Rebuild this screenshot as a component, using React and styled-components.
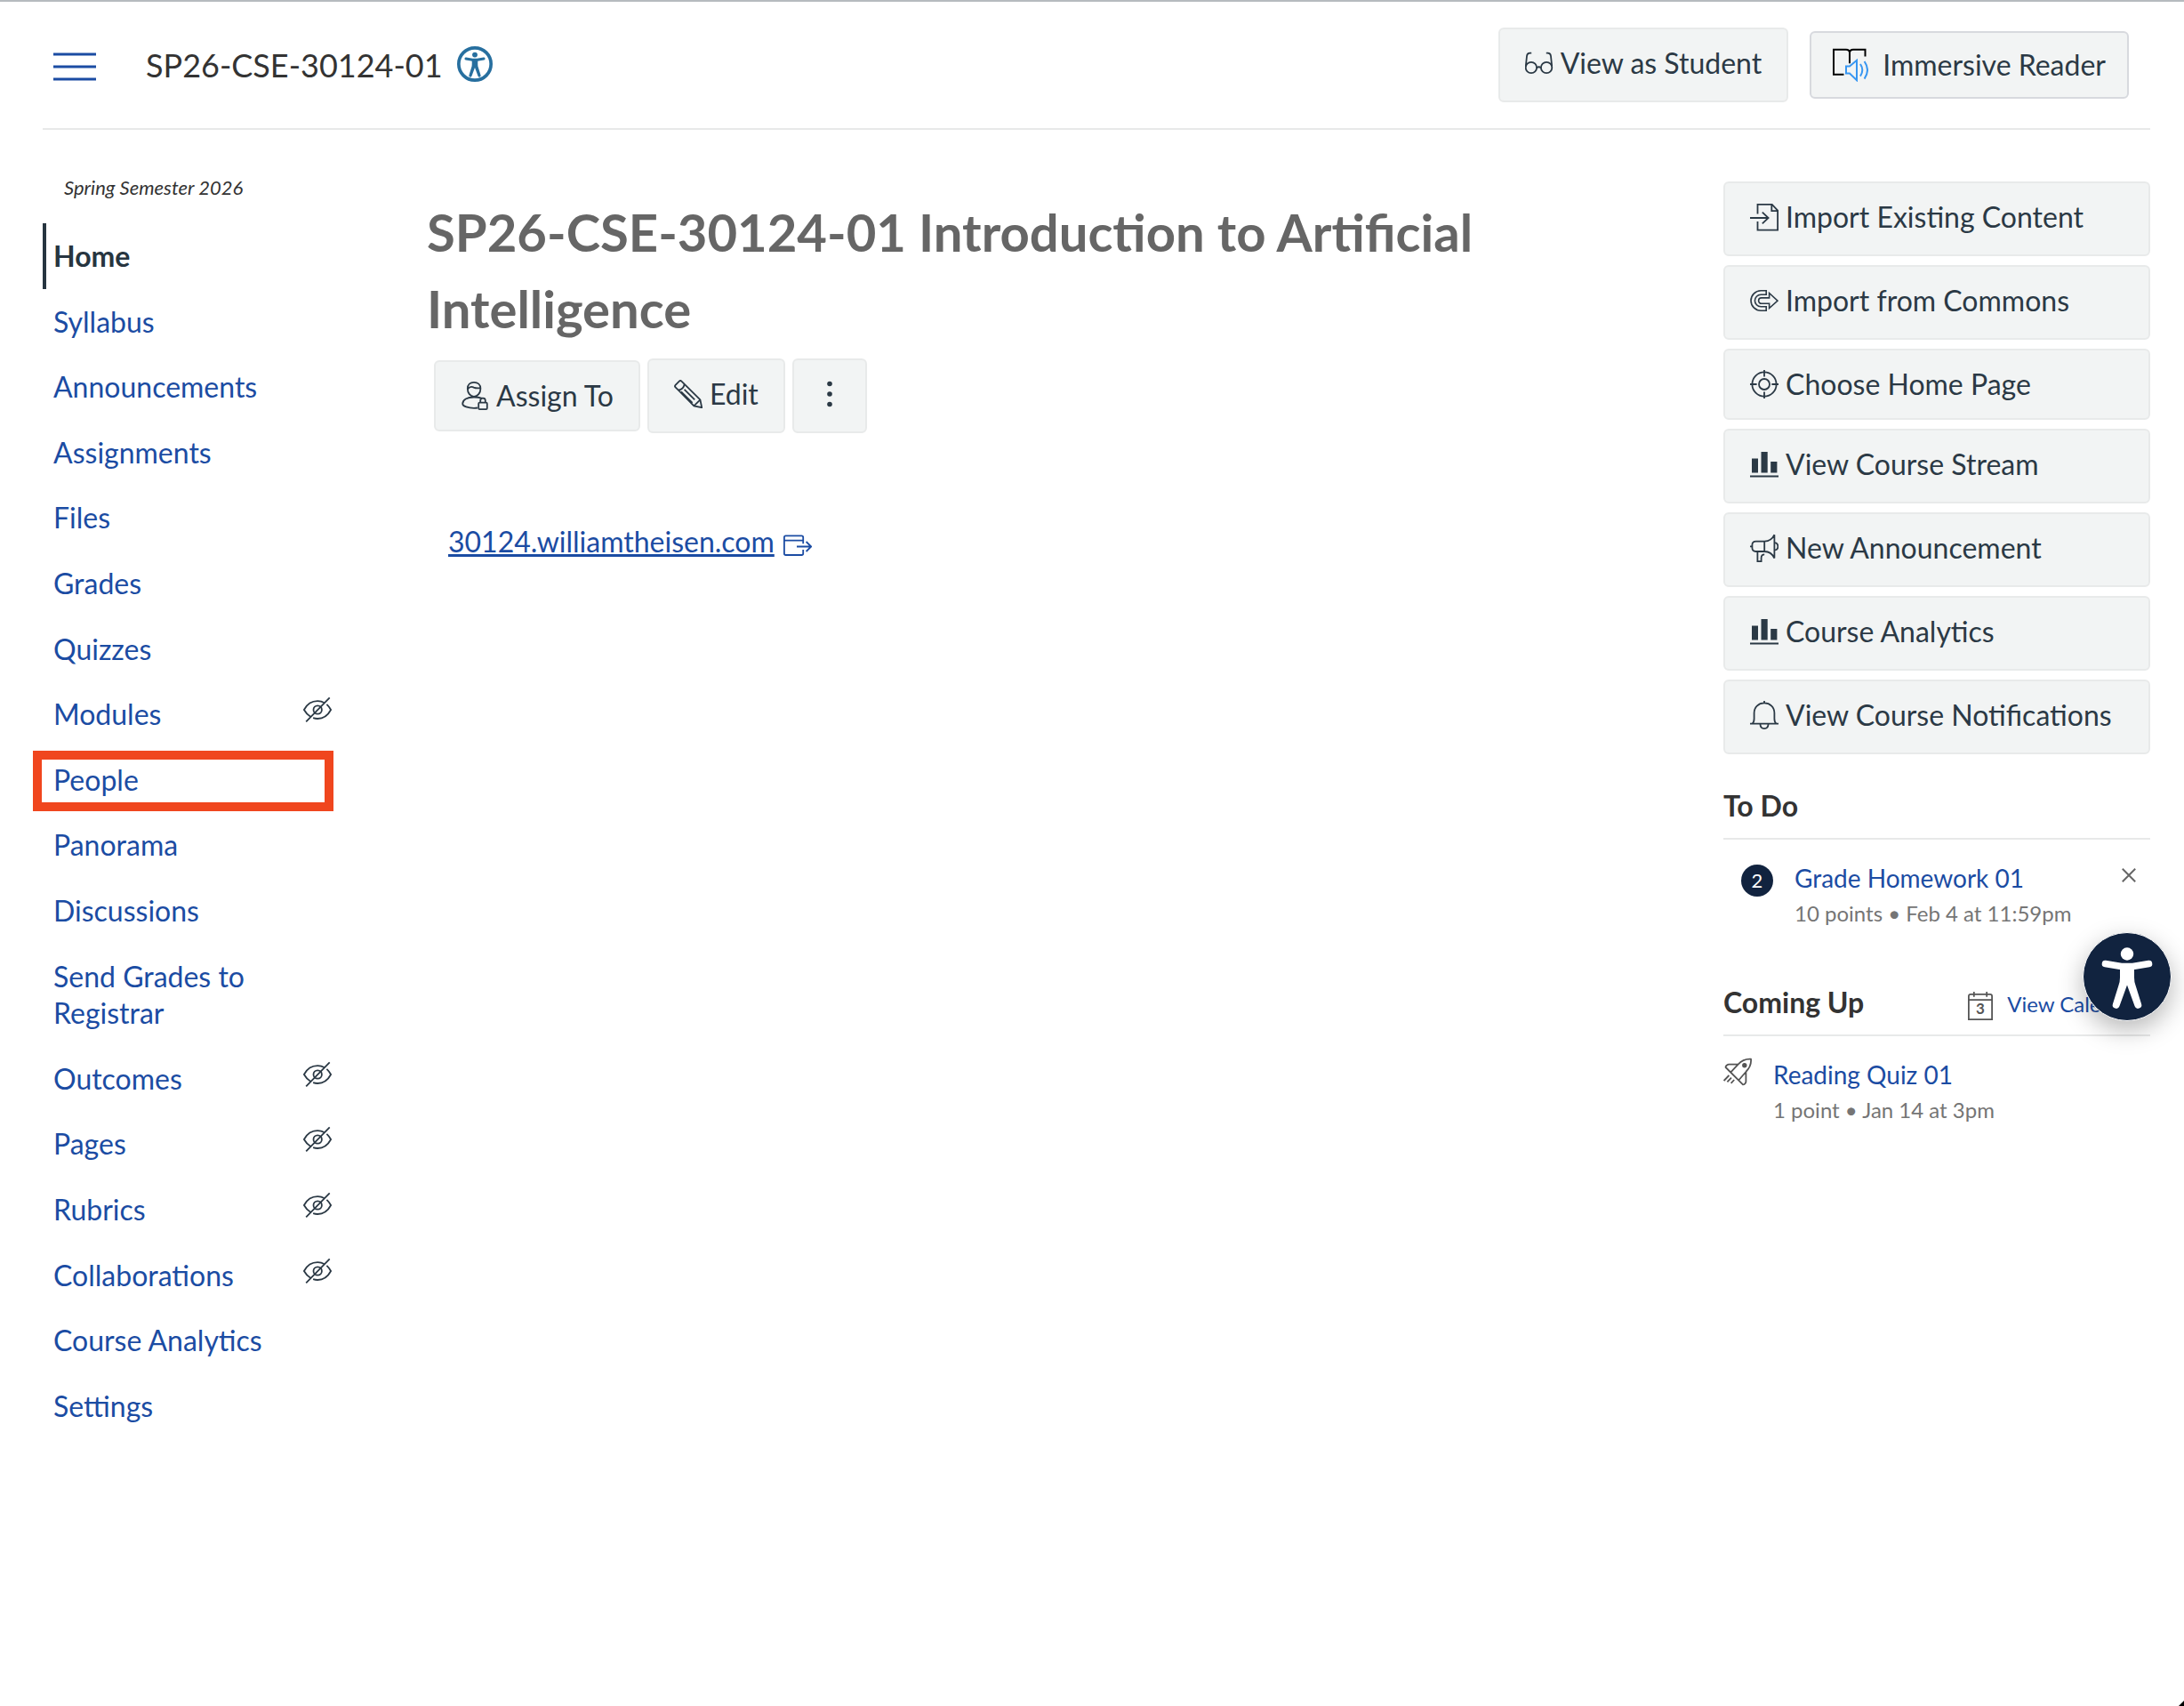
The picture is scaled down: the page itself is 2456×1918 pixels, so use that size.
import React from "react"
import styled, { createGlobalStyle, css } from "styled-components"

const GlobalStyle = createGlobalStyle`
    * {
        box-sizing: border-box;
    }
    body {
        margin: 0;
        background: #ffffff;
        color: #333333;
        font-family: "Lato", sans-serif;
        font-size: 32px;
    }
    h1, h2, p, ul {
        margin: 0;
        padding: 0;
    }
    ul {
        list-style: none;
    }
`

const Page = styled.div`
    position: relative;
    min-height: 100vh;
    border-top: 2px solid #b6bbbf;
    padding: 0 38px 0 48px;
`

/* header */
const Header = styled.header`
    display: flex;
    align-items: center;
    height: 144px;
    padding: 0 24px 0 12px;
    border-bottom: 2px solid #e8e9e9;
`

const MenuButton = styled.button`
    display: flex;
    margin-right: 56px;
    padding: 4px 0 0;
    border: none;
    background: none;
    color: #1b4ca3;
    cursor: pointer;
`

const Crumb = styled.span`
    font-size: 36px;
    line-height: 44px;
`

const RoundIcon = styled.button`
    display: flex;
    margin-left: 16px;
    padding: 0 0 2px;
    border: none;
    background: none;
    color: #276f9f;
    cursor: pointer;
`

const HeaderActions = styled.div`
    display: flex;
    align-items: center;
    gap: 24px;
    margin-left: auto;
`

/* buttons */
const buttonBase = css`
    display: flex;
    align-items: center;
    gap: 8px;
    padding: 18px 28px;
    border: 2px solid #e8eaea;
    border-radius: 6px;
    background: #f2f4f4;
    color: #2b3945;
    font-family: inherit;
    font-size: 32px;
    line-height: 40px;
    text-decoration: none;
    white-space: nowrap;
    cursor: pointer;
`

const Button = styled.button`
    ${buttonBase}
`

const LinkButton = styled.a`
    ${buttonBase}
    padding-bottom: 22px;
`

const MoreButton = styled.button`
    ${buttonBase}
    padding-bottom: 22px;
`

const ReaderButton = styled(Button)`
    gap: 16px;
    padding: 16px 24px;
    border-color: #d7d9de;
`

/* columns */
const Columns = styled.div`
    display: grid;
    grid-template-columns: 325px minmax(0, 1fr) 480px;
`

const CourseNav = styled.nav`
    padding-top: 51px;
`

const Term = styled.p`
    margin-bottom: 26px;
    padding-left: 24px;
    font-size: 22px;
    font-style: italic;
    line-height: 28px;
`

const NavItem = styled.li`
    position: relative;
    ${({ $marked }) =>
        $marked &&
        css`
            &::after {
                content: "";
                position: absolute;
                inset: 4px -2px 1px -11px;
                border: 10px solid #f0461e;
                pointer-events: none;
            }
        `}
`

const NavLink = styled.a`
    display: flex;
    align-items: flex-start;
    justify-content: space-between;
    padding: 16px 0 16px 8px;
    border-left: 4px solid ${({ $active }) => ($active ? "#273540" : "transparent")};
    color: ${({ $active }) => ($active ? "#273540" : "#1b4ca3")};
    font-weight: ${({ $active }) => ($active ? "bold" : "normal")};
    line-height: 1.3;
    text-decoration: none;
    svg {
        color: #2b3945;
    }
`

const Main = styled.main`
    padding: 72px 38px 0 107px;
`

const Title = styled.h1`
    color: #666666;
    font-size: 58px;
    font-weight: bold;
    line-height: 86px;
`

const Toolbar = styled.div`
    display: flex;
    align-items: center;
    gap: 8px;
    margin-top: 13px;
    padding-left: 8px;
`

const PageBody = styled.div`
    margin-top: 98px;
    padding-left: 24px;
    line-height: 48px;
`

const ExternalLink = styled.a`
    display: inline-flex;
    align-items: center;
    gap: 10px;
    color: #1b4ca3;
    text-decoration: none;
    span {
        text-decoration: underline;
        text-decoration-thickness: 3px;
    }
`

/* right side */
const Aside = styled.aside`
    padding-top: 58px;
`

const ActionList = styled.div`
    display: flex;
    flex-direction: column;
    gap: 10px;
    margin-bottom: 38px;
`

const SectionHead = styled.div`
    display: flex;
    align-items: flex-end;
    justify-content: space-between;
    padding-bottom: 16px;
    border-bottom: 2px solid #e8e9e9;
`

const SectionTitle = styled.h2`
    font-size: 32px;
    font-weight: bold;
    line-height: 40px;
`

const CalendarLink = styled.a`
    display: flex;
    align-items: flex-end;
    gap: 16px;
    height: 40px;
    padding-right: 8px;
    color: #1b4ca3;
    font-size: 24px;
    line-height: 36px;
    text-decoration: none;
    svg {
        color: #555555;
    }
`

const EventList = styled.ul`
    padding: 22px 0 60px;
`

const EventItem = styled.li`
    display: flex;
    align-items: flex-start;
    gap: 24px;
    padding: ${({ $inset }) => ($inset ? "0 16px 0 20px" : "0")};
`

const EventIcon = styled.span`
    display: flex;
    padding-top: 2px;
    color: #555555;
`

const Badge = styled.span`
    width: 36px;
    margin-top: 6px;
    border-radius: 50%;
    background: #11233f;
    color: #ffffff;
    font-size: 22px;
    line-height: 36px;
    text-align: center;
`

const EventText = styled.div`
    flex: 1;
    line-height: 40px;
    a {
        color: #1b4ca3;
        font-size: 28px;
        text-decoration: none;
    }
    p {
        color: #757575;
        font-size: 24px;
    }
`

const DismissButton = styled.button`
    display: flex;
    margin-top: 10px;
    padding: 0;
    border: none;
    background: none;
    color: #666666;
    cursor: pointer;
`

const AccessButton = styled.button`
    position: fixed;
    top: 1048px;
    right: 14px;
    display: flex;
    padding: 0;
    border: 1px solid #ffffff;
    border-radius: 50%;
    background: #11233f;
    color: #ffffff;
    box-shadow: 0 10px 28px rgba(0, 0, 0, 0.28);
    cursor: pointer;
`

const Corner = styled.div`
    position: fixed;
    right: 0;
    bottom: 0;
    width: 6px;
    height: 6px;
    background: #000000;
    clip-path: polygon(100% 0, 100% 100%, 0 100%);
`

/* icons */
const IconSvg = styled.svg`
    flex: none;
    fill: none;
    stroke: currentColor;
`

const Icon = ({ width = 32, height = 32, stroke = 1.8, children }) => (
    <IconSvg width={width} height={height} viewBox={`0 0 ${width} ${height}`} strokeWidth={stroke} aria-hidden="true">
        {children}
    </IconSvg>
)

const MenuIcon = () => (
    <Icon width={48} height={32} stroke={3}>
        <path d="M0 2h48M0 16h48M0 30h48" />
    </Icon>
)

const Person = ({ size, ring }) => (
    <svg width={size} height={size} viewBox="0 0 98 98" fill="none" stroke="currentColor" aria-hidden="true">
        {ring && <circle cx="49" cy="49" r="44.5" strokeWidth="9" />}
        <circle cx="49" cy="23.5" r="7.2" fill="currentColor" stroke="none" />
        <path d="M24.5 34.5l18 3h13l18-3" strokeWidth="7.6" strokeLinecap="round" strokeLinejoin="round" />
        <path d="M41 36h16v14q0 5 1.6 9L65 79.5a3.9 3.9 0 0 1-7.4 2.8L49 58.5l-8.6 23.8A3.9 3.9 0 0 1 33 79.5L39.400 59q1.600-4 1.600-9z" fill="currentColor" stroke="none" />
    </svg>
)

const GlassesIcon = () => (
    <Icon>
        <circle cx="6.9" cy="21" r="6.2" />
        <circle cx="24.1" cy="21" r="6.2" />
        <path d="M13 21.5q2.5-2.4 5 0M.8 19.5L2 8c.3-2.3 1.6-3.4 3.4-3.4h1.8M30.2 19.5L29 8c-.3-2.3-1.6-3.4-3.4-3.4h-1.8" />
    </Icon>
)

const ReaderIcon = () => (
    <Icon width={40} height={38} stroke={2}>
        <path stroke="#000000" d="M12.5 29.8H1V1.8h14c2.2 0 4 1.2 4 3.6v11.8M19 5.4c0-2.4 1.8-3.6 4-3.6h13.5v7.8" />
        <path stroke="#3796f1" d="M15 20.6h4l8-6.800v22.400l-8-7.600h-4zM31 18q4.600 6.800 0 13.600M35.600 15q6.800 9.800 0 19.600" />
    </Icon>
)

const ImportIcon = () => (
    <Icon>
        <path d="M8.5 12.5V1.9h16.2l6.4 6.8v22H8.5V21M24.3 2v7.2H31M0 17h20.8M13.8 10.6l6.8 6.4-6.8 6.4" />
    </Icon>
)

const CommonsIcon = () => (
    <Icon stroke={1.6}>
        <path d="M18.2 4.8h-6a11.2 11.2 0 0 0 0 22.4h6v-4.4h-6a6.8 6.8 0 0 1 0-13.6h6z" />
        <path d="M21.6 12.9h-8.8a3.1 3.1 0 0 0 0 6.4h8.8v5.2L31 16.1l-9.4-8.6z" />
    </Icon>
)

const TargetIcon = () => (
    <Icon>
        <circle cx="16" cy="16" r="13.6" />
        <circle cx="16" cy="16" r="6" />
        <path d="M16 0v7.6M16 24.4V32M0 16h7.6M24.4 16H32" />
    </Icon>
)

const BarsIcon = () => (
    <Icon>
        <path fill="currentColor" stroke="none" d="M2 9.4h7v16H2zM12.5 2h7.2v23.4h-7.2zM23.2 13h7.2v12.4h-7.2zM0 28.6h32v2H0z" />
    </Icon>
)

const MegaphoneIcon = () => (
    <Icon>
        <path d="M16.2 8.6H6.6c-2.6 0-4.2 1.6-4.2 4.2v3c0 2.6 1.6 4.2 4.2 4.2h9.6zM16.2 8.6c5 0 9-2.6 11.2-7.4v26.4c-2.200-4.800-6.200-7.600-11.200-7.600M27.600 10.200c5 .6 5 7.800 0 8.400M2.400 14.300H0M8.400 20.200v11h4.200v-3.800c0-2.600 1.200-4 3.600-4" />
    </Icon>
)

const BellIcon = () => (
    <Icon>
        <path d="M16 0v2.2M0 25.6h32M2.6 25.4c1.6-1.2 2-3 2-5.4v-6.2C4.6 7 9.4 2.4 16 2.4S27.4 7 27.4 13.8V20c0 2.4.4 4.200 2 5.400M11.400 26c.4 6.800 8.800 6.800 9.200 0" />
    </Icon>
)

const HiddenIcon = () => (
    <Icon>
        <path d="M29.7 2.4L3.2 29.4M24 8.2C21.6 6.9 19 6.2 16.2 6.2 9.6 6.2 4 10.2.9 16c1.8 3.2 4 5.6 7 7.4M26.4 9.8c1.8 1.6 3.4 3.600 4.700 6.200-3.200 6-8.600 10-15 10-1.800 0-3.400-.3-5-.8" />
        <circle cx="16.2" cy="16" r="4.7" />
    </Icon>
)

const UserLockIcon = () => (
    <Icon>
        <path d="M7.8 8C7.8 3.5 10.8.9 15 .9S22.4 3.5 22.4 8c0 4.6-3.2 8.8-7.4 8.8S7.8 12.6 7.8 8zM8 8.4c2-2.8 4.2-3.2 6.8-1.8 2.6 1.2 5.2.8 7.4.6M24 18.8c-2.6-.9-5.6-1.3-9-1.3-7.6 0-12.8 2.8-12.8 7.5 0 2.8 6.4 4.8 12.8 4.8 1.4 0 2.8-.1 4-.3M22.2 23.4v-2.2c0-3.4 5.6-3.4 5.6 0v2.2" />
        <rect x="20.2" y="23.6" width="9.6" height="7.5" rx="1.2" />
    </Icon>
)

const PencilIcon = () => (
    <Icon>
        <path d="M8.4 1.6L29.4 22.4l1.8 8.8-8.8-1.8L1.6 8.4c-.8-.8-.8-1.8 0-2.6l4.2-4.2c.8-.8 1.8-.8 2.6 0zM11.6 4.8c-.4 3.4-3.2 6.2-6.8 6.8M29.2 22.6l-6.6 6.6M8 13.4l12.6 12.4M11.6 10.8L23.2 22.4" />
    </Icon>
)

const MoreIcon = () => (
    <Icon width={24} height={40}>
        <circle cx="12" cy="8.5" r="2.8" fill="currentColor" stroke="none" />
        <circle cx="12" cy="20" r="2.8" fill="currentColor" stroke="none" />
        <circle cx="12" cy="31.5" r="2.8" fill="currentColor" stroke="none" />
    </Icon>
)

const ExternalIcon = () => (
    <Icon>
        <path d="M22.2 18.200v-7c0-1.200-.6-1.800-1.800-1.800H2.600C1.400 9.400.9 10 .9 11.200v18c0 1.200.6 1.800 1.800 1.800h17.700c1.200 0 1.800-.6 1.800-1.800V25M.9 14.600h21.300M15 21.500h16M25.600 16l5.600 5.500-5.600 5.500" />
    </Icon>
)

const CloseIcon = () => (
    <Icon width={16} height={16} stroke={2}>
        <path d="M.8.8l14.4 14.4M15.2.8L.8 15.2" />
    </Icon>
)

const CalendarIcon = () => (
    <Icon width={28} height={32}>
        <path d="M.9 31.1V5c0-1.6.8-2.2 2.2-2.2h21.8c1.4 0 2.2.6 2.2 2.2v26.1zM.9 9.2h26.2M6.8 0v5.8M21.2 0v5.8" />
        <text x="14" y="25" fill="currentColor" stroke="none" fontSize="17" fontWeight="bold" textAnchor="middle">3</text>
    </Icon>
)

const RocketIcon = () => (
    <Icon>
        <path d="M16.6 7.6C20 3.8 24.6 1.2 31 1.6c.6 6-1.8 10.6-5.6 14.4L17.6 25M16.6 7.6L8.4 16.4M16.6 7.6H6.4c-1.6 0-4.2 2-3.8 3.4L22 30.4c1.6 0 3.4-1.8 3.4-3.4V16M6.4 20L.6 26M9 22.6L4.4 27.4M12.2 25L8.6 28.8" strokeLinejoin="round" />
        <circle cx="23.8" cy="8.8" r="1.8" fill="currentColor" />
    </Icon>
)

const navItems = [
    { label: "Home", active: true },
    { label: "Syllabus" },
    { label: "Announcements" },
    { label: "Assignments" },
    { label: "Files" },
    { label: "Grades" },
    { label: "Quizzes" },
    { label: "Modules", hidden: true },
    { label: "People", marked: true },
    { label: "Panorama" },
    { label: "Discussions" },
    { label: "Send Grades to Registrar" },
    { label: "Outcomes", hidden: true },
    { label: "Pages", hidden: true },
    { label: "Rubrics", hidden: true },
    { label: "Collaborations", hidden: true },
    { label: "Course Analytics" },
    { label: "Settings" },
]

const courseActions = [
    { label: "Import Existing Content", icon: ImportIcon, Tag: LinkButton },
    { label: "Import from Commons", icon: CommonsIcon, Tag: LinkButton },
    { label: "Choose Home Page", icon: TargetIcon, Tag: Button },
    { label: "View Course Stream", icon: BarsIcon, Tag: LinkButton },
    { label: "New Announcement", icon: MegaphoneIcon, Tag: LinkButton },
    { label: "Course Analytics", icon: BarsIcon, Tag: LinkButton },
    { label: "View Course Notifications", icon: BellIcon, Tag: LinkButton },
]

const App = () => {
    return (
        <Page>
            <GlobalStyle />
            <Header>
                <MenuButton aria-label="Hide course navigation">
                    <MenuIcon />
                </MenuButton>
                <Crumb>SP26-CSE-30124-01</Crumb>
                <RoundIcon aria-label="Accessibility report">
                    <Person size={40} ring />
                </RoundIcon>
                <HeaderActions>
                    <LinkButton href="#student">
                        <GlassesIcon />
                        View as Student
                    </LinkButton>
                    <ReaderButton>
                        <ReaderIcon />
                        Immersive Reader
                    </ReaderButton>
                </HeaderActions>
            </Header>

            <Columns>
                <CourseNav>
                    <Term>Spring Semester 2026</Term>
                    <ul>
                        {navItems.map(({ label, active, hidden, marked }) => (
                            <NavItem key={label} $marked={marked}>
                                <NavLink href="#nav" $active={active}>
                                    {label}
                                    {hidden && <HiddenIcon />}
                                </NavLink>
                            </NavItem>
                        ))}
                    </ul>
                </CourseNav>

                <Main>
                    <Title>SP26-CSE-30124-01 Introduction to Artificial Intelligence</Title>
                    <Toolbar>
                        <Button>
                            <UserLockIcon />
                            Assign To
                        </Button>
                        <LinkButton href="#edit">
                            <PencilIcon />
                            Edit
                        </LinkButton>
                        <MoreButton aria-label="More options">
                            <MoreIcon />
                        </MoreButton>
                    </Toolbar>
                    <PageBody>
                        <ExternalLink href="#site">
                            <span>30124.williamtheisen.com</span>
                            <ExternalIcon />
                        </ExternalLink>
                    </PageBody>
                </Main>

                <Aside>
                    <ActionList>
                        {courseActions.map(({ label, icon: ActionIcon, Tag }) => (
                            <Tag key={label} href={Tag === LinkButton ? "#action" : undefined}>
                                <ActionIcon />
                                {label}
                            </Tag>
                        ))}
                    </ActionList>

                    <SectionHead>
                        <SectionTitle>To Do</SectionTitle>
                    </SectionHead>
                    <EventList>
                        <EventItem $inset>
                            <Badge>2</Badge>
                            <EventText>
                                <a href="#homework">Grade Homework 01</a>
                                <p>10 points • Feb 4 at 11:59pm</p>
                            </EventText>
                            <DismissButton aria-label="Dismiss Grade Homework 01">
                                <CloseIcon />
                            </DismissButton>
                        </EventItem>
                    </EventList>

                    <SectionHead>
                        <SectionTitle>Coming Up</SectionTitle>
                        <CalendarLink href="#calendar">
                            <CalendarIcon />
                            View Calendar
                        </CalendarLink>
                    </SectionHead>
                    <EventList>
                        <EventItem>
                            <EventIcon>
                                <RocketIcon />
                            </EventIcon>
                            <EventText>
                                <a href="#quiz">Reading Quiz 01</a>
                                <p>1 point • Jan 14 at 3pm</p>
                            </EventText>
                        </EventItem>
                    </EventList>
                </Aside>
            </Columns>

            <AccessButton aria-label="Accessibility options">
                <Person size={98} />
            </AccessButton>
            <Corner />
        </Page>
    )
}

export default App
